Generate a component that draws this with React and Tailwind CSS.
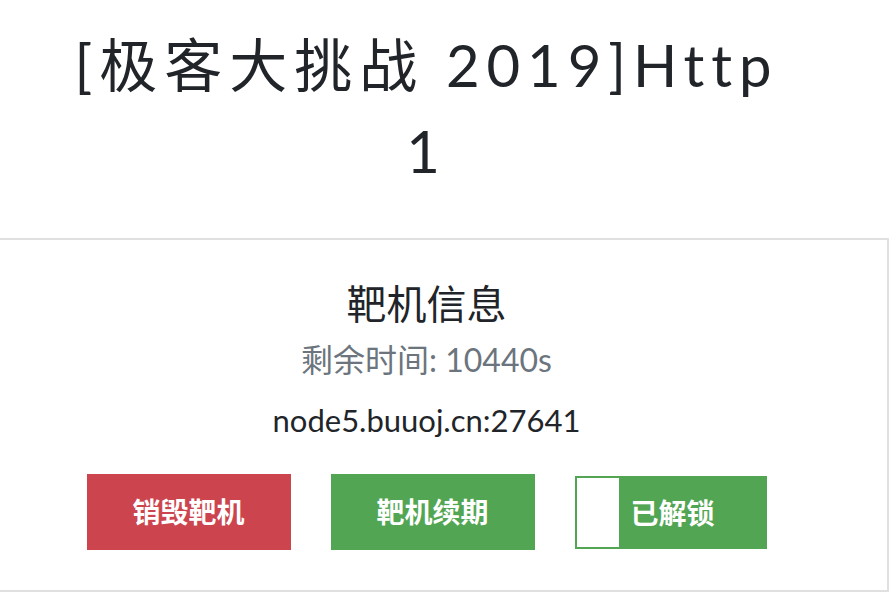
export default function App() {
  return (
    <div className="min-h-screen bg-white text-[#212529]">
      <div className="-ml-[36px] w-[925px] font-['Lato','Noto_Sans_CJK_SC',sans-serif]">
        {/* challenge title */}
        <h1 className="pt-[22px] pb-[44px] text-center text-[58px] leading-[86px] font-normal tracking-[0.12em]">
          [极客大挑战 2019]Http
          <br />
          1
        </h1>

        {/* instance card */}
        <div className="h-[354px] border-2 border-[#e0e0e0] bg-white text-center">
          <h2 className="mt-[40px] text-[40px] leading-[48px] font-normal">靶机信息</h2>
          <p className="mt-[12px] text-[32px] leading-[40px] text-[#6c757d]">剩余时间: 10440s</p>
          <p className="mt-[20px] text-[31px] leading-[40px]">node5.buuoj.cn:27641</p>

          <div className="mt-[34px] flex justify-center gap-[40px]">
            <button className="h-[76px] w-[204px] bg-[#cc444e] text-[28px] font-bold text-white">
              销毁靶机
            </button>
            <button className="h-[76px] w-[204px] bg-[#52a552] text-[28px] font-bold text-white">
              靶机续期
            </button>
            <div className="relative mt-[2px] h-[73px] w-[192px] border-2 border-[#52a552] bg-[#52a552]">
              <span className="absolute left-0 top-0 h-full w-[42px] bg-white" />
              <span className="flex h-full items-center justify-center pl-[4px] text-[28px] font-bold text-white">
                已解锁
              </span>
            </div>
          </div>
        </div>
      </div>
    </div>
  );
}
